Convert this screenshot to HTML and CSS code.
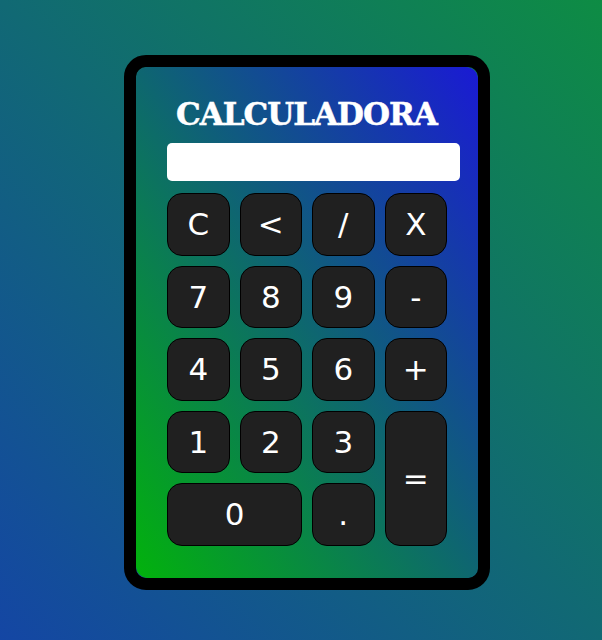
FILE: index.html
```html
<!DOCTYPE html>
<html lang="pt">
<head>
<meta charset="utf-8">
<title>Calculadora</title>
<link rel="stylesheet" href="styles.css">
</head>
<body>
<div class="calc">
  <div class="inner">
    <h1 class="title">CALCULADORA</h1>
    <input class="display" type="text">
    <div class="keys">
      <button class="key">C</button>
      <button class="key">&lt;</button>
      <button class="key">/</button>
      <button class="key">X</button>
      <button class="key">7</button>
      <button class="key">8</button>
      <button class="key">9</button>
      <button class="key">-</button>
      <button class="key">4</button>
      <button class="key">5</button>
      <button class="key">6</button>
      <button class="key">+</button>
      <button class="key">1</button>
      <button class="key">2</button>
      <button class="key">3</button>
      <button class="key key-eq">=</button>
      <button class="key key-zero">0</button>
      <button class="key">.</button>
    </div>
  </div>
</div>
</body>
</html>
```
FILE: styles.css
```css
html, body {
  margin: 0;
  padding: 0;
  height: 100%;
}
body {
  background: linear-gradient(to top right, #1446a4, #0e8c44);
  display: flex;
  align-items: flex-start;
  font-family: "DejaVu Sans", sans-serif;
}
.calc {
  margin-left: 124px;
  margin-top: 55px;
  width: 342px;
  height: 511px;
  border: 12px solid #000;
  border-radius: 22px;
  overflow: hidden;
}
.inner {
  width: 100%;
  height: 100%;
  box-sizing: border-box;
  border-radius: 12px;
  background: linear-gradient(to top right, #02b20c, #1a1ad4);
  padding: 23px 0 0 31px;
  display: flex;
  flex-direction: column;
}
.title {
  margin: 0 0 0 9px;
  font-family: "DejaVu Serif", serif;
  font-weight: bold;
  font-size: 31px;
  line-height: 48px;
  color: #fff;
  -webkit-text-stroke: 0.5px #fff;
  letter-spacing: -1px;
  white-space: nowrap;
}
.display {
  margin-top: 5px;
  width: 293px;
  height: 38px;
  box-sizing: border-box;
  border: none;
  border-radius: 5px;
  background: #fff;
  padding: 0;
}
.keys {
  margin-top: 12px;
  display: grid;
  grid-template-columns: repeat(4, 62.5px);
  grid-auto-rows: 62.5px;
  gap: 10px;
}
.key {
  background: #202020;
  border: 1px solid #000;
  border-radius: 15px;
  color: #fff;
  font-family: "DejaVu Sans", sans-serif;
  font-size: 31px;
  padding: 0;
  display: flex;
  align-items: center;
  justify-content: center;
}
.key-eq {
  grid-column: 4;
  grid-row: 4 / span 2;
}
.key-zero {
  grid-column: 1 / span 2;
}
```
